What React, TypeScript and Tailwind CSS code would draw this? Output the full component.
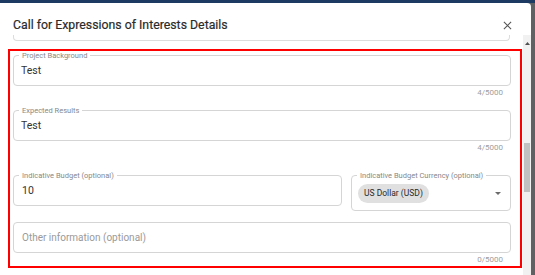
export default function App() {
  return (
    <div className="w-[535px] h-[275px] overflow-hidden bg-[#5f6163] flex flex-col font-['Roboto',sans-serif]">
      <div className="h-[3px] bg-[#1d3a62] shrink-0" />
      <div className="flex flex-1 min-h-0">
        <div className="w-[531px] bg-white rounded-tr-[4px] flex flex-col">
          {/* header */}
          <div className="h-[32px] shrink-0 flex items-start justify-between pl-[13px] pr-[19px] pt-[14px]">
            <h2 className="text-[12.3px] leading-[16px] font-normal text-[#2a2a2a] [-webkit-text-stroke:0.2px_#2a2a2a]">
              Call for Expressions of Interests Details
            </h2>
            <svg width="9" height="9" viewBox="0 0 10 10" className="mt-[4px]">
              <path d="M1 1L9 9M9 1L1 9" stroke="#555" strokeWidth="1.2" />
            </svg>
          </div>

          <div className="flex flex-1 min-h-0">
            <div className="flex-1 overflow-hidden">
              {/* previous field (scrolled) */}
              <div className="ml-[13px] mr-[13px] h-[6px] border border-t-0 border-[#dcdcdc] rounded-b-[4px]" />

              <div className="ml-[8px] mr-[1px] mt-[8px] border-2 border-[#f00] pl-[3px] pr-[9px] pt-[4px] pb-[2px]">
                <Field label="Project Background" value="Test" counter="4/5000" />
                <div className="mt-[13px]">
                  <Field label="Expected Results" value="Test" counter="4/5000" />
                </div>

                <div className="mt-[23px] flex items-start gap-[9px]">
                  <div className="flex-1 relative h-[31px] border border-[#d5d5d5] rounded-[4px] flex items-center pl-[8px]">
                    <Label text="Indicative Budget (optional)" />
                    <span className="text-[10.5px] text-[#333]">10</span>
                  </div>
                  <div className="w-[160px] relative h-[36px] border border-[#d5d5d5] rounded-[4px] flex items-center justify-between pl-[6px] pr-[9px]">
                    <Label text="Indicative Budget Currency (optional)" />
                    <span className="h-[19px] px-[6px] rounded-full bg-[#e0e0e0] flex items-center text-[8.5px] font-normal text-[#2a2a2a]">
                      US Dollar (USD)
                    </span>
                    <svg width="6" height="3" viewBox="0 0 6 3">
                      <path d="M0 0H6L3 3Z" fill="#6b6b6b" />
                    </svg>
                  </div>
                </div>

                <div className="mt-[11px]">
                  <div className="h-[31px] border border-[#d5d5d5] rounded-[4px] flex items-center pl-[8px]">
                    <span className="text-[10px] text-[#9a9a9a]">Other information (optional)</span>
                  </div>
                  <div className="mt-[3px] h-[8px] flex justify-end pr-[8px] text-[8px] leading-[8px] text-[#9e9e9e]">0/5000</div>
                </div>
              </div>

              <div className="ml-[13px] mr-[13px] mt-[7px] h-[31px] border border-[#dcdcdc] rounded-[4px]" />
            </div>

            {/* scrollbar */}
            <div className="w-[8px] bg-[#f1f1f1] flex flex-col items-center">
              <div className="h-[14px] flex items-center justify-center pt-[2px]">
                <svg width="5" height="3" viewBox="0 0 5 3">
                  <path d="M2.5 0L5 3H0Z" fill="#505050" />
                </svg>
              </div>
              <div className="mt-[94px] w-[6px] h-[49px] bg-[#c1c1c1]" />
            </div>
          </div>
        </div>
      </div>
    </div>
  );
}

function Label({ text }: { text: string }) {
  return (
    <span className="absolute left-[5px] top-[-5px] bg-white px-[3px] text-[7.5px] leading-[9px] text-[#888]">
      {text}
    </span>
  );
}

function Field({ label, value, counter }: { label: string; value: string; counter: string }) {
  return (
    <div>
      <div className="relative h-[31px] border border-[#d5d5d5] rounded-[4px] flex items-center pl-[7px]">
        <Label text={label} />
        <span className="text-[10.5px] text-[#333]">{value}</span>
      </div>
      <div className="mt-[3px] h-[8px] flex justify-end pr-[8px] text-[8px] leading-[8px] text-[#9e9e9e]">{counter}</div>
    </div>
  );
}
